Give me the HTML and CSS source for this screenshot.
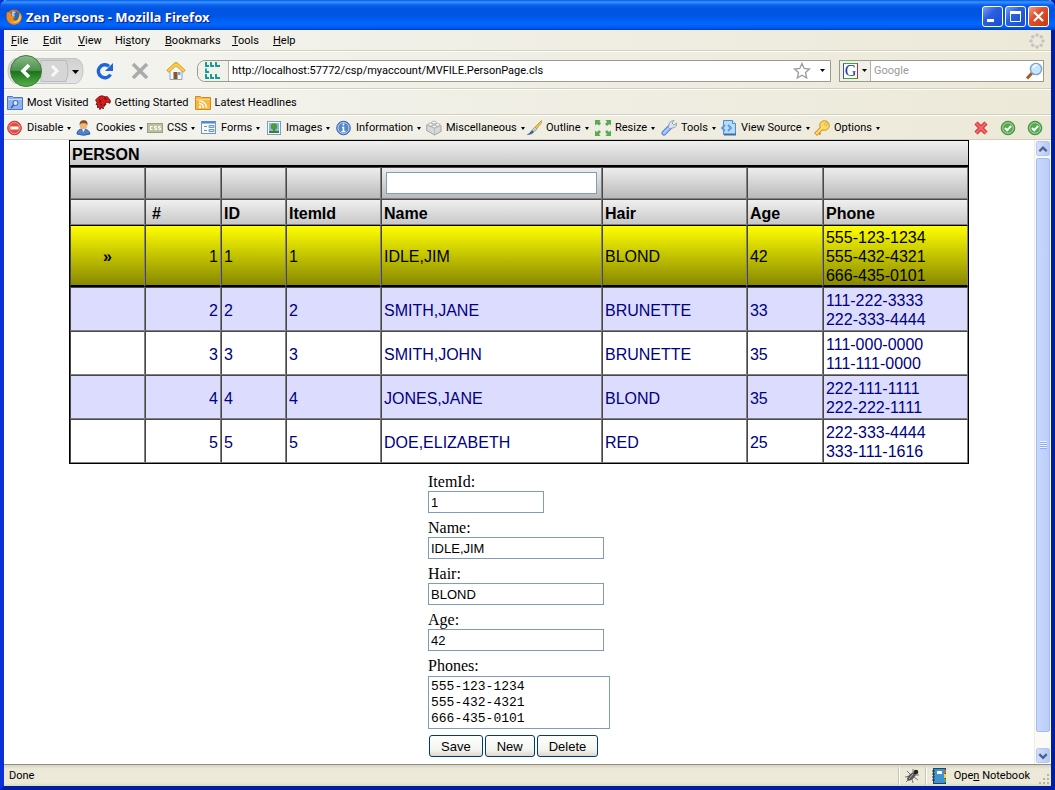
FILE: index.html
```html
<!DOCTYPE html>
<html lang="en">
<head>
<meta charset="utf-8">
<title>Zen Persons - Mozilla Firefox</title>
<link rel="stylesheet" href="styles.css">
</head>
<body>
<div class="window">
  <header class="titlebar">
    <svg class="i16" viewBox="0 0 16 16"><circle cx="8" cy="8" r="7.500" fill="#e66a0a"/><circle cx="8.500" cy="7" r="5.200" fill="#2d67b8"/><path d="M6 2.500q3-1 4 1l-2 1 1 2-3 1z" fill="#9cd0f2"/><path d="M1 3Q0 9 2 12q4 5 9 3 5-2 4.700-8l-.7-2q0 5-3 6.500-4 1-5-2l2-1-1-1.500-3-.5 1-2-2-.5z" fill="#f08a18"/><path d="M14 4q2 5-1 8-4 3-8 1 7 0 8-5z" fill="#fcd34a"/></svg>
    <h1 class="titlebar-text">Zen Persons - Mozilla Firefox</h1>
    <div class="window-buttons">
      <button class="winbtn" aria-label="Minimize"><svg viewBox="0 0 19 19"><rect x="4" y="12" width="7" height="3" fill="#fff"/></svg></button>
      <button class="winbtn" aria-label="Maximize"><svg viewBox="0 0 19 19"><path d="M4.500 5v9.500h10V5" fill="none" stroke="#fff"/><path d="M4 5.500h11" stroke="#fff" stroke-width="3"/></svg></button>
      <button class="winbtn winbtn-close" aria-label="Close"><svg viewBox="0 0 19 19"><path d="M5 5l9 9M14 5l-9 9" stroke="#fff" stroke-width="2.200"/></svg></button>
    </div>
  </header>

  <nav class="menubar">
    <div class="menus">
      <a href="#"><u>F</u>ile</a><a href="#"><u>E</u>dit</a><a href="#"><u>V</u>iew</a><a href="#">Hi<u>s</u>tory</a><a href="#"><u>B</u>ookmarks</a><a href="#"><u>T</u>ools</a><a href="#"><u>H</u>elp</a>
    </div>
    <svg class="i16" viewBox="0 0 16 16" fill="#c4c4c4"><circle cx="8" cy="2" r="1.800"/><circle cx="12.200" cy="3.800" r="1.800"/><circle cx="14" cy="8" r="1.800"/><circle cx="12.200" cy="12.200" r="1.800"/><circle cx="8" cy="14" r="1.800"/><circle cx="3.800" cy="12.200" r="1.800"/><circle cx="2" cy="8" r="1.800"/><circle cx="3.800" cy="3.800" r="1.800"/></svg>
  </nav>

  <div class="navbar">
    <button class="nav-history" aria-label="Back and forward">
      <svg width="78" height="34" viewBox="0 0 78 34">
        <defs><linearGradient id="gb" x2="0" y2="1"><stop offset="0" stop-color="#8cb98c"/><stop offset=".48" stop-color="#4a934a"/><stop offset=".52" stop-color="#1b721b"/><stop offset="1" stop-color="#57b54a"/></linearGradient>
        <linearGradient id="gg" x2="0" y2="1"><stop offset="0" stop-color="#d0d0d0"/><stop offset="1" stop-color="#e4e4e4"/></linearGradient></defs>
        <path d="M8 4.500h61q7 2 7 12t-7 13H8Q1 26 1 17T8 4.500z" fill="url(#gg)" stroke="#c4c4c2"/>
        <path d="M34 6.500h25q4 10.500 0 21H34z" fill="#d6d6d6" stroke="#bababa"/>
        <path d="M45 12l5 5-5 5" fill="none" stroke="#f8f8f8" stroke-width="3"/>
        <circle cx="19" cy="17" r="15.500" fill="url(#gb)" stroke="#3c7a3c"/>
        <path d="M22 11l-6 6 6 6" fill="none" stroke="#fff" stroke-width="3.600"/>
        <path d="M65 16h7l-3.500 4z" fill="#000"/>
      </svg>
    </button>
    <button class="nav-btn" aria-label="Reload"><svg width="18" height="18" viewBox="0 0 18 18"><path d="M14.500 12.500A6.500 6.500 0 1 1 13 4.200" fill="none" stroke="#1c66d8" stroke-width="3.400"/><path d="M17 1v8H9z" fill="#1c66d8"/></svg></button>
    <button class="nav-btn" aria-label="Stop"><svg width="18" height="18" viewBox="0 0 18 18"><path d="M2 2l14 14M16 2L2 16" stroke="#ababab" stroke-width="3.600"/></svg></button>
    <button class="nav-btn" aria-label="Home"><svg width="20" height="18" viewBox="0 0 20 18"><path d="M4 9v8.500h12V9l-6-6z" fill="#f3f6fc" stroke="#8ba3cd"/><rect x="7.500" y="10" width="4" height="7" fill="#8a5527"/><rect x="12" y="10" width="2.500" height="3" fill="#72a2d8"/><path d="M1.500 9.500L10 1.800l8.500 7.700" fill="none" stroke="#d99a16" stroke-width="3.600"/><path d="M2 9L10 2l8 7" fill="none" stroke="#ffd34b" stroke-width="2"/></svg></button>
    <div class="urlbar">
      <span class="urlbar-icon"><svg class="i18" viewBox="0 0 18 18" fill="none" stroke="#149a96" stroke-width="1.800"><path d="M2 0v4h3M7 0v4h3M12 0v4h4M7 12v4h3M12 12v4h4M2 12v4h3M2 6.500v3.500h3" /><path d="M1 2h2M6 2h2M11 2h2M1 14h2M6 14h2M11 14h2"/></svg></span>
      <input class="url-input" aria-label="Location" value="http://localhost:57772/csp/myaccount/MVFILE.PersonPage.cls">
      <svg width="18" height="18" viewBox="0 0 18 18"><path d="M9 1.500l2.200 5 5.300.5-4 3.600 1.200 5.400L9 13.200 4.300 16l1.200-5.400-4-3.600 5.300-.5z" fill="#fff" stroke="#9a9a9a" stroke-width="1.300"/></svg>
      <svg class="caret url-caret" viewBox="0 0 5 3"><path d="M0 0h5L2.500 3z"/></svg>
    </div>
    <div class="searchbar">
      <button class="engine" aria-label="Search engine"><span class="engine-g">G</span><svg class="caret" viewBox="0 0 5 3"><path d="M0 0h5L2.500 3z"/></svg></button>
      <input class="search-input" aria-label="Search" placeholder="Google">
      <svg width="18" height="18" viewBox="0 0 18 18"><path d="M2 16.500l5-5.500" stroke="#a45c2c" stroke-width="3"/><circle cx="11" cy="7" r="5.600" fill="#c6e6fb" stroke="#7ba3cc" stroke-width="1.400"/><path d="M8 6q1-3 4-3" stroke="#fff" stroke-width="1.500" fill="none"/></svg>
    </div>
  </div>

  <nav class="bookmarks">
    <a href="#"><svg class="i16" viewBox="0 0 16 16"><path d="M.5 1.500h5l1 1h9v12H.5z" fill="#8fb3ee" stroke="#4d77c8"/><path d="M1 4h14v1H1z" fill="#c5d9fa"/><circle cx="8.500" cy="8" r="2.500" fill="#dcebff" stroke="#2e5cb4"/><path d="M6.500 10L4 13" stroke="#2e5cb4" stroke-width="1.500"/></svg>Most Visited</a>
    <a href="#"><svg class="i16" viewBox="0 0 16 16"><path d="M.5 5L4 1.500l3-.8 3 1 2.500 0 3 4-.5 2.500-3-1-1.500.5.500 2-1.500-.5.500 2-2-.5.500 3-2.500-1-1 2-1-2.500-1.500.5 0-3-1.500 0 1-2z" fill="#dc1919" stroke="#400" stroke-width=".7"/><path d="M9.500 3.500l2 1M4 4l2 2-2 1.500M5 9l2 1" stroke="#200" fill="none"/></svg>Getting Started</a>
    <a href="#"><svg class="i16" viewBox="0 0 16 16"><path d="M.5 1.500h5l1 1h9v12H.5z" fill="#f8b842" stroke="#d78a1c"/><path d="M1 4h14v1H1z" fill="#ffe08e"/><circle cx="5" cy="12" r="1.200" fill="#fff"/><path d="M4 8.500q4 0 4.500 4.500M4 5.800q7 0 7.500 7.200" fill="none" stroke="#fff" stroke-width="1.300"/></svg>Latest Headlines</a>
  </nav>

  <nav class="devbar">
    <div class="devtools">
      <button><svg class="i16" viewBox="0 0 16 16"><circle cx="7.500" cy="8" r="6.800" fill="#e34b41" stroke="#c53b33"/><circle cx="7.500" cy="8" r="5.500" fill="none" stroke="#f09b93"/><rect x="3.500" y="6.500" width="8" height="3" fill="#fff"/></svg><span>Disable</span></button>
      <button><svg class="i16" viewBox="0 0 16 16"><path d="M1 14q0-5 6-5t7 5q-6 2.500-13 0z" fill="#4e83d0" stroke="#315fa8"/><path d="M6 9l1.500 3L9 9z" fill="#fff"/><circle cx="7.500" cy="5.500" r="3.800" fill="#eab77c"/><path d="M3.500 5q0-5 4.500-4.700Q12 .5 11.500 5q-1-2-4-2T3.500 5z" fill="#8c4b19"/></svg><span>Cookies</span></button>
      <button><svg class="i16" viewBox="0 0 16 16"><rect x=".5" y="3.500" width="15" height="9" fill="#bdc3a0" stroke="#9aa17c"/><path d="M5.500 6.500h-2v3h2M9.500 6.500h-2v1.500h2v1.500h-2M13.500 6.500h-2v1.500h2v1.500h-2" fill="none" stroke="#fff"/></svg><span>CSS</span></button>
      <button><svg class="i16" viewBox="0 0 16 16"><rect x=".5" y="1.500" width="14" height="12" fill="#f7fbff" stroke="#6d96d0"/><path d="M1 2.500h13" stroke="#4d85d8" stroke-width="2"/><path d="M3 6.500h3M3 10.500h3" stroke="#789"/><path d="M8 5.500h5v2H8zM8 9.500h5v2H8z" fill="#cfe1f8" stroke="#6d96d0"/></svg><span>Forms</span></button>
      <button><svg class="i16" viewBox="0 0 16 16"><rect x="1.500" y="1.500" width="13" height="13" fill="#fff" stroke="#7c9cc4"/><rect x="3" y="3" width="10" height="10" fill="#83bbea"/><circle cx="8" cy="6.500" r="3.200" fill="#4e9b3b"/><path d="M3 13v-2h10v2zM7.300 9h1.500v3H7.300z" fill="#427d2d"/></svg><span>Images</span></button>
      <button><svg class="i16" viewBox="0 0 16 16"><circle cx="7.500" cy="8" r="6.800" fill="#5488c8" stroke="#396aab"/><circle cx="7.500" cy="8" r="5.500" fill="none" stroke="#bad2ef"/><path d="M7.500 3.500v2M6 7.500h1.500v4M5.500 11.500h4" fill="none" stroke="#fff" stroke-width="1.500"/></svg><span>Information</span></button>
      <button><svg class="i16" viewBox="0 0 16 16"><path d="M.7 5l6-2.500L15 5.500v6l-6.500 3.500-7.800-4.500z" fill="#d8d8d8" stroke="#a3a3a3"/><path d="M1 5l7.500 3.500L15 5.500M8.500 8.500v6" fill="none" stroke="#bbb"/><g fill="#f3f3f3" stroke="#a3a3a3" stroke-width=".7"><ellipse cx="4.500" cy="4.500" rx="2.200" ry="1.500"/><ellipse cx="11.500" cy="4.800" rx="2.200" ry="1.500"/><ellipse cx="8" cy="2.500" rx="2.200" ry="1.500"/><ellipse cx="8.300" cy="6.500" rx="2.200" ry="1.300"/></g></svg><span>Miscellaneous</span></button>
      <button><svg class="i16" viewBox="0 0 16 16"><path d="M15.500.5L16 2l-7 9-2-2z" fill="#f3c443" stroke="#b98821" stroke-width=".7"/><path d="M9 7l2 2-3 3-2-2z" fill="#ccc" stroke="#888" stroke-width=".5"/><path d="M6 10l2 2q-2 3-7.500 3Q4 13 6 10z" fill="#3b658e"/></svg><span>Outline</span></button>
      <button><svg class="i16" viewBox="0 0 16 16" fill="#55ad50"><path d="M0 0h5.500L4.500 1.500 6 3.500 4 5.500 2 4 0 5.500zM16 0v5.500L14.500 4 12 6l-2-2 2-2-1.500-2zM0 16v-5.500L2 12l2-2 2 2-2 2 1.500 2zM16 16h-5.500L12 14l-2-2 2-2 2 2 2-1.500z"/></svg><span>Resize</span></button>
      <button><svg class="i16" viewBox="0 0 16 16"><path d="M3 13L10 6" stroke="#4d7fcd" stroke-width="5" stroke-linecap="round"/><path d="M3 13L9 7" stroke="#a8c8f4" stroke-width="3" stroke-linecap="round"/><path d="M8 5q0-4 5-4.500L11 3l2 2 2.500-2Q16 8 11 8L9 9 7 7z" fill="#dce3ef" stroke="#8592a9" stroke-width=".8"/></svg><span>Tools</span></button>
      <button><svg class="i16" viewBox="0 0 16 16"><path d="M2.500.5h9l3 3v11h-12z" fill="#b9dbf8" stroke="#4d8ed2"/><path d="M11.500.5v3h3" fill="#fff" stroke="#4d8ed2"/><path d="M4 5L1 8l3 3M7 5l3 3-3 3" fill="none" stroke="#5a9ae0" stroke-width="1.800"/><path d="M3 14.500h12" stroke="#376cb3" stroke-width="2"/></svg><span>View Source</span></button>
      <button><svg class="i16" viewBox="0 0 16 16"><path d="M1.500 14.500L9 7" stroke="#d4941d" stroke-width="4"/><path d="M4 12l2.500 2.500" stroke="#d4941d" stroke-width="2"/><circle cx="10.500" cy="5.500" r="4.800" fill="#fcd85b" stroke="#d4941d"/><path d="M2 14L9 7" stroke="#fde07a" stroke-width="2"/><circle cx="12" cy="4" r="1.300" fill="#fff" stroke="#b57c16" stroke-width=".6"/></svg><span>Options</span></button>
    </div>
    <div class="dev-status">
      <svg class="i16" viewBox="0 0 16 16"><path d="M3 3l10 10M13 3L3 13" stroke="#d52f35" stroke-width="4.400"/><path d="M3 3l10 10M13 3L3 13" stroke="#f26a6a" stroke-width="2.200"/></svg>
      <svg class="i16" viewBox="0 0 16 16"><circle cx="8" cy="8" r="6.800" fill="#55a84f" stroke="#3f8f3a"/><circle cx="8" cy="8" r="5.300" fill="none" stroke="#a8d8a2"/><path d="M5 8l2.200 2.200L11.200 6" fill="none" stroke="#fff" stroke-width="2"/></svg>
      <svg class="i16" viewBox="0 0 16 16"><circle cx="8" cy="8" r="6.800" fill="#55a84f" stroke="#3f8f3a"/><circle cx="8" cy="8" r="5.300" fill="none" stroke="#a8d8a2"/><path d="M5 8l2.200 2.200L11.200 6" fill="none" stroke="#fff" stroke-width="2"/></svg>
    </div>
  </nav>

  <div class="viewport">
    <main class="page">
      <table class="grid">
        <colgroup><col class="c-sel"><col class="c-num"><col class="c-id"><col class="c-item"><col class="c-name"><col class="c-hair"><col class="c-age"><col class="c-phone"></colgroup>
        <thead>
          <tr class="row-title"><th colspan="8">PERSON</th></tr>
          <tr class="row-filter"><td></td><td></td><td></td><td></td><td><input aria-label="Filter by name"></td><td></td><td></td><td></td></tr>
          <tr class="row-head"><th></th><th class="num-head">#</th><th>ID</th><th>ItemId</th><th>Name</th><th>Hair</th><th>Age</th><th>Phone</th></tr>
        </thead>
        <tbody>
          <tr class="selected"><td class="mark">»</td><td class="num">1</td><td>1</td><td>1</td><td>IDLE,JIM</td><td>BLOND</td><td>42</td><td>555-123-1234<br>555-432-4321<br>666-435-0101</td></tr>
          <tr class="alt"><td></td><td class="num">2</td><td>2</td><td>2</td><td>SMITH,JANE</td><td>BRUNETTE</td><td>33</td><td>111-222-3333<br>222-333-4444</td></tr>
          <tr><td></td><td class="num">3</td><td>3</td><td>3</td><td>SMITH,JOHN</td><td>BRUNETTE</td><td>35</td><td>111-000-0000<br>111-111-0000</td></tr>
          <tr class="alt"><td></td><td class="num">4</td><td>4</td><td>4</td><td>JONES,JANE</td><td>BLOND</td><td>35</td><td>222-111-1111<br>222-222-1111</td></tr>
          <tr><td></td><td class="num">5</td><td>5</td><td>5</td><td>DOE,ELIZABETH</td><td>RED</td><td>25</td><td>222-333-4444<br>333-111-1616</td></tr>
        </tbody>
      </table>

      <form class="person-form">
        <div class="field"><label for="item">ItemId:</label><input id="item" class="short" value="1"></div>
        <div class="field"><label for="name">Name:</label><input id="name" value="IDLE,JIM"></div>
        <div class="field"><label for="hair">Hair:</label><input id="hair" value="BLOND"></div>
        <div class="field"><label for="age">Age:</label><input id="age" value="42"></div>
        <div class="field"><label for="phones">Phones:</label><textarea id="phones">555-123-1234
555-432-4321
666-435-0101</textarea></div>
        <div class="form-buttons"><button type="button">Save</button><button type="button">New</button><button type="button">Delete</button></div>
      </form>
    </main>
    <div class="scrollbar">
      <button class="scroll-btn" aria-label="Scroll up"><svg viewBox="0 0 13 13"><path d="M2.500 9l4-4 4 4" fill="none" stroke="#4d6185" stroke-width="2.400"/></svg></button>
      <div class="thumb"><div class="grip"></div></div>
      <button class="scroll-btn" aria-label="Scroll down"><svg viewBox="0 0 13 13"><path d="M2.500 4.500l4 4 4-4" fill="none" stroke="#4d6185" stroke-width="2.400"/></svg></button>
    </div>
  </div>

  <footer class="statusbar">
    <span class="status-text">Done</span>
    <span class="status-panel"><svg class="i16" viewBox="0 0 16 16"><path d="M1 9l5-1M3 3l4 4M2 14l4-4M9 15l-1-4M14 12l-4-3M15 7h-4M9 1v5" stroke="#777" fill="none"/><ellipse cx="7.500" cy="8.500" rx="5.500" ry="2.600" transform="rotate(-42 7.500 8.500)" fill="#555"/><circle cx="12" cy="4" r="2.300" fill="#222"/><path d="M5 11l4-5" stroke="#aaa"/></svg></span>
    <span class="status-panel"><svg class="i16" viewBox="0 0 16 16"><rect x="2.500" y=".5" width="12" height="15" fill="#3f93cf" stroke="#1c4668"/><path d="M14 2v3" stroke="#e35c34" stroke-width="2"/><path d="M14 6v4" stroke="#f4cf3c" stroke-width="2"/><path d="M14 11v3" stroke="#5ca642" stroke-width="2"/><rect x="6" y="3" width="5" height="3" fill="#fff"/><path d="M1 3h3M1 6h3M1 9h3M1 12h3" stroke="#333"/></svg><a href="#" class="notebook">Ope<u>n</u> Notebook</a></span>
    <svg class="resize-grip" viewBox="0 0 14 14" fill="#b8b4a3"><path d="M10 2h2v2h-2zM6 6h2v2H6zM10 6h2v2h-2zM2 10h2v2H2zM6 10h2v2H6zM10 10h2v2h-2z"/></svg>
  </footer>
</div>
</body>
</html>
```
FILE: styles.css
```css
* { box-sizing: border-box; }
body { margin: 0; background: #0a3cc8; }
button, input, textarea { font: inherit; margin: 0; border-radius: 0; }
svg { display: block; flex: none; }
a { color: inherit; text-decoration: none; }

.i16 { width: 16px; height: 16px; }
.i18 { width: 18px; height: 18px; }
.caret { width: 5px; height: 3px; }

.window {
  display: flex;
  flex-direction: column;
  height: 100vh;
  border: solid;
  border-width: 0 4px 4px;
  border-color: #0842d8 #001ea0 #001ea0 #0831d9;
  background: #ece9d8;
  font: 11px/14px Roboto, sans-serif;
  color: #000;
}

/* title bar */
.titlebar {
  display: flex;
  align-items: center;
  gap: 4px;
  height: 30px;
  flex: none;
  margin: 0 -4px;
  padding: 3px 6px 0 6px;
  border-radius: 7px 7px 0 0;
  background: linear-gradient(#0058e6 0, #3a93ff 2px, #0a62ee 5px, #0054e0 9px, #0055e5 16px, #0068ff 24px, #005cf4 27px, #0040c8 30px);
}
.titlebar-text {
  flex: 1;
  margin: 0;
  font: bold 13px/16px "Noto Sans", sans-serif;
  color: #fff;
  text-shadow: 1px 1px 1px #0a1883;
}
.window-buttons { display: flex; gap: 2px; }
.winbtn {
  width: 21px;
  height: 21px;
  padding: 0;
  border: 1px solid #fff;
  border-radius: 3px;
  background: linear-gradient(135deg, #7c9ff5, #2a5fe0 40%, #1a4dd0);
}
.winbtn-close { background: linear-gradient(135deg, #f0a088, #e0502b 40%, #c63a12); }

/* menus and toolbars */
.menubar, .navbar, .bookmarks, .devbar {
  display: flex;
  align-items: center;
  flex: none;
  background: linear-gradient(90deg, #f4f4f1, #ece9d8);
  border-bottom: 1px solid #d3cfba;
}
.menubar { height: 21px; padding: 1px 6px 0 7px; justify-content: space-between; }
.menus { display: grid; grid-template-columns: 32px 35px 37px 50px 67px 41px auto; }

.navbar { height: 38px; padding: 1px 7px 0 3px; border-top: 1px solid #fff; }
.nav-history, .nav-btn { padding: 0; border: 0; background: none; }
.nav-btn { margin-left: 17px; }
.nav-history { margin-right: -6px; }
.urlbar {
  display: flex;
  align-items: center;
  flex: 1;
  height: 22px;
  margin-left: 11px;
  border: 1px solid #9c9a8c;
  border-radius: 8px 0 0 8px;
  background: #fff;
}
.urlbar-icon {
  display: flex;
  align-items: center;
  justify-content: center;
  align-self: stretch;
  width: 31px;
  border-right: 1px solid #b5b2a2;
  border-radius: 8px 0 0 8px;
  background: #f1f1ea;
}
.url-input { flex: 1; min-width: 0; padding: 1px 3px 0; border: 0; background: none; }
.url-caret { margin: 0 5px 0 9px; }
.searchbar {
  display: flex;
  align-items: center;
  width: 205px;
  height: 22px;
  margin-left: 8px;
  border: 1px solid #9c9a8c;
  background: #fff;
}
.engine {
  display: flex;
  align-items: center;
  align-self: stretch;
  gap: 4px;
  width: 31px;
  padding: 0 3px;
  border: 0;
  border-right: 1px solid #b5b2a2;
  background: #f1f1ea;
}
.engine-g {
  width: 16px;
  height: 16px;
  border: 1px solid;
  border-color: #2fae32 #d8211d #2fae32 #2455c8;
  background: #fff;
  font: 16px/14px "Liberation Serif", serif;
  color: #14349c;
}
.search-input { flex: 1; min-width: 0; padding: 1px 3px 0; border: 0; background: none; }
.search-input::placeholder { color: #9c9a94; opacity: 1; }

.bookmarks { height: 26px; padding: 2px 3px 0; gap: 6px; border-top: 1px solid #fff; }
.bookmarks a { display: flex; align-items: center; gap: 4px; }

.devbar { height: 25px; padding: 1px 8px 0 3px; justify-content: space-between; border-top: 1px solid #fff; }
.devtools { display: grid; grid-template-columns: 69px 71px 54px 65px 70px 90px 100px 69px 66px 60px 93px auto; }
.devtools button {
  display: flex;
  align-items: center;
  gap: 4px;
  padding: 0;
  border: 0;
  background: none;
  white-space: nowrap;
}
.devtools button::after {
  content: "";
  border: solid transparent;
  border-width: 3px 2px 0;
  border-top-color: #000;
}
.dev-status { display: flex; gap: 11px; }

/* page */
.viewport { display: flex; flex: 1; min-height: 0; background: #fff; }
.page { flex: 1; min-width: 0; overflow: hidden; }
.grid {
  width: 100%;
  max-width: 900px;
  margin: 0 auto;
  table-layout: fixed;
  border: 1px solid #000;
  border-collapse: separate;
  border-spacing: 0;
  font: 16px/19px "Liberation Sans", sans-serif;
  color: #000080;
}
.c-sel { width: 75px; }
.c-num { width: 76px; }
.c-id { width: 65px; }
.c-item { width: 95px; }
.c-name { width: 221px; }
.c-hair { width: 145px; }
.c-age { width: 76px; }
.c-phone { width: 145px; }
.grid th, .grid td {
  height: 44px;
  padding: 2px 2px 0;
  border: 1px solid;
  border-color: #484848 #808080 #808080 #484848;
  text-align: left;
}
.grid thead { color: #000; }
.grid .row-title th { height: 26px; border: 0; border-bottom: 2px solid #000; background: linear-gradient(#f0f0f0, #c8c8c8); }
.grid .row-filter td { height: 32px; padding: 0 4px; background: linear-gradient(#ededed, #bababa); }
.row-filter input { display: block; width: 100%; height: 22px; border: 1px solid #7f9db9; background: #fff; }
.grid .row-head th { height: 26px; background: linear-gradient(#f0f0f0, #c8c8c8); }
.grid .row-head .num-head { padding-left: 6px; }
.grid .selected td {
  height: 62px;
  border-top-color: #000;
  border-bottom: 2px solid #000;
  background: linear-gradient(#ffff00, #888800);
  color: #000;
}
.grid .alt td { background: #dcdcff; }
.grid .num { text-align: right; }
.grid .mark { text-align: center; font-weight: bold; }

.person-form {
  display: flex;
  flex-direction: column;
  gap: 6px;
  width: 182px;
  margin: 9px auto 0;
  font: 16px/18px "Liberation Serif", serif;
}
.field { display: flex; flex-direction: column; align-items: flex-start; }
.field input {
  width: 176px;
  height: 22px;
  padding: 0 2px;
  border: 1px solid #7f9db9;
  font: 13px/18px "Liberation Sans", sans-serif;
}
.field .short { width: 116px; }
.field textarea {
  width: 100%;
  height: 53px;
  margin-top: 1px;
  padding: 2px 2px 0;
  border: 1px solid #7f9db9;
  resize: none;
  overflow: hidden;
  font: 13px/16px "Liberation Mono", monospace;
}
.form-buttons { display: flex; gap: 2px; padding-left: 1px; }
.form-buttons button {
  height: 22px;
  padding: 1px 11px 0;
  border: 1px solid #003c74;
  border-radius: 3px;
  background: linear-gradient(#fff, #f3f3ee 70%, #dcd8cd);
  font: 13px/18px "Liberation Sans", sans-serif;
}

.scrollbar {
  display: flex;
  flex-direction: column;
  width: 17px;
  padding: 1px;
  border-left: 1px solid #eeede5;
  background: #fafaf6;
}
.scroll-btn {
  height: 15px;
  padding: 0;
  border: 1px solid #b6c8f2;
  border-radius: 2px;
  background: linear-gradient(90deg, #d2dfff, #b4c8f8);
}
.thumb {
  display: flex;
  align-items: center;
  justify-content: center;
  flex: 1;
  margin: 2px 0 16px;
  border: 1px solid #a4bdf0;
  border-radius: 2px;
  background: linear-gradient(90deg, #cad8fd, #bacdfa);
}
.grip { width: 7px; height: 8px; background: repeating-linear-gradient(#eef4fe 0 1px, #8cb0f8 1px 2px); }

/* status bar */
.statusbar {
  display: flex;
  align-items: center;
  flex: none;
  height: 22px;
  border-top: 1px solid #918f84;
  background: linear-gradient(#d8d4c4, #ece9d8 4px, #ece9d8 18px, #dcd9c5);
}
.status-text { flex: 1; padding-left: 5px; }
.status-panel {
  display: flex;
  align-items: center;
  gap: 7px;
  height: 18px;
  padding: 0 5px;
  border-left: 1px solid #c8c4b2;
  box-shadow: inset 1px 0 #fff;
}
.resize-grip { width: 14px; height: 14px; margin-left: 2px; align-self: flex-end; }
```
